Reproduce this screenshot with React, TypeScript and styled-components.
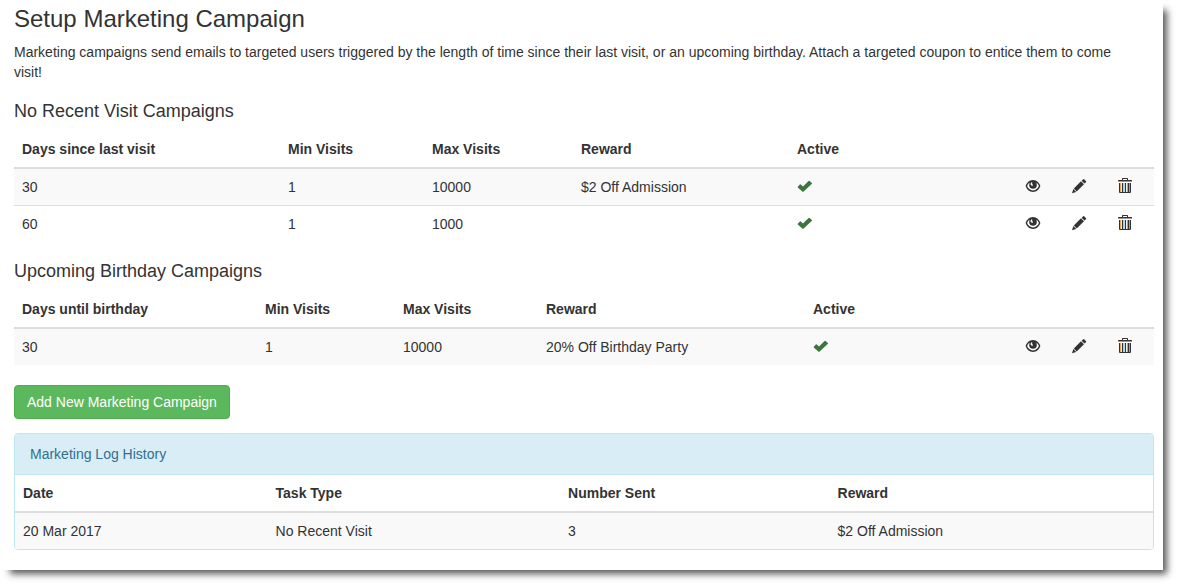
import React from "react";
import styled, { createGlobalStyle } from "styled-components";

const GlobalStyle = createGlobalStyle`
  *, *::before, *::after { box-sizing: border-box; }
  body {
    margin: 0;
    background: #fff;
    color: #333;
    font-family: "Liberation Sans", Arial, sans-serif;
    font-size: 14px;
    line-height: 20px;
  }
`;

const Page = styled.div`
  padding: 0 15px 15px 0;
`;

const Sheet = styled.main`
  padding: 6px 9px 20px 14px;
  background: #fff;
  box-shadow: 7px 7px 7px -3px rgba(0, 0, 0, 0.65);
`;

const Title = styled.h1`
  margin: 0 0 10px;
  font-size: 24px;
  line-height: 26px;
  font-weight: 400;
`;

const Intro = styled.p`
  margin: 0 0 19px;
  padding-right: 16px;
`;

const SectionTitle = styled.h2`
  margin: 0 0 10px;
  font-size: 18px;
  line-height: 20px;
  font-weight: 400;
`;

const Section = styled.section`
  margin-bottom: 19px;
`;

const Table = styled.table`
  width: 100%;
  table-layout: fixed;
  border-collapse: separate;
  border-spacing: 0;
`;

const Col = styled.col<{ $share: number }>`
  width: ${({ $share }) => ($share / 1140) * 100}%;
`;

const HeadCell = styled.th`
  padding: 8px;
  border-bottom: 2px solid #ddd;
  text-align: left;
  font-weight: 700;
`;

const Row = styled.tr`
  &:nth-child(odd) { background: #f9f9f9; }
  &:not(:first-child) td { border-top: 1px solid #ddd; }
`;

const Cell = styled.td`
  padding: 8px;
`;

const IconCell = styled(Cell)`
  padding: 0 8px 2px;
`;

const IconButton = styled.button`
  display: flex;
  margin: 0;
  padding: 0;
  border: 0;
  background: none;
  color: #333;
  cursor: pointer;
`;

const Icon = styled.svg`
  display: block;
  width: 16px;
  height: 16px;
  fill: currentColor;
`;

const CheckIcon = styled(Icon)`
  color: #3c763d;
`;

const AddButton = styled.button`
  display: block;
  margin: 20px 0 14px;
  padding: 6px 12px;
  border: 1px solid #4cae4c;
  border-radius: 4px;
  background: #5cb85c;
  color: #fff;
  font: inherit;
  cursor: pointer;
`;

const Panel = styled.section`
  border: 1px solid #bce8f1;
  border-radius: 4px;
  overflow: hidden;
`;

const PanelHeading = styled.h2`
  margin: 0;
  padding: 10px 15px;
  border-bottom: 1px solid #bce8f1;
  background: #d9edf7;
  color: #31708f;
  font-size: 14px;
  line-height: 20px;
  font-weight: 400;
`;

const Check = () => (
  <CheckIcon viewBox="0 0 16 16" role="img" aria-label="Active">
    <path d="M.8 8.800 2.800 6.500Q3.300 6.100 3.800 6.500L6 8.500 11.600 2.900Q12.100 2.500 12.600 2.900L14.900 5Q15.200 5.400 14.900 5.800L6.700 13.600Q6 14.100 5.300 13.600L.8 9.600Q.5 9.200.8 8.800Z" />
  </CheckIcon>
);

const Eye = () => (
  <Icon viewBox="0 0 16 16" aria-hidden="true">
    <path
      fillRule="evenodd"
      d="M8 2C11.6 2 14.4 4.9 15.4 8 14.4 11 11.6 14 8 14S1.6 11 .6 8C1.600 4.900 4.400 2 8 2ZM4.800 4.600C3.500 5.400 2.600 6.700 2.100 8 3.100 10.300 5.200 12.500 8 12.500S12.900 10.300 13.900 8C13.400 6.700 12.500 5.400 11.200 4.600 11.600 5.300 11.800 6.100 11.800 6.900A3.800 3.800 0 0 1 4.200 6.900C4.200 6.100 4.400 5.300 4.800 4.600ZM7.200 3.900C5.900 4.300 5.200 5.600 5.700 6.700 6.100 7.500 6.900 7.900 7.700 7.700 8.500 7.400 7.600 6.800 7.300 6.100 7 5.400 7 4.600 7.200 3.900Z"
    />
  </Icon>
);

const Pencil = () => (
  <Icon viewBox="0 0 16 16" aria-hidden="true">
    <path d="M12 1.400Q12.700 .8 13.400 1.400L14.900 2.900Q15.500 3.600 14.900 4.200L13.500 5.600 10.600 2.800ZM10 3.300 13 6.200 5.700 13.400 2.800 10.500ZM2.300 11 5.200 13.900 1 15.200Z" />
  </Icon>
);

const Trash = () => (
  <Icon viewBox="0 1 16 16" aria-hidden="true">
    <path d="M5 3V1.700Q5 1 5.700 1H10.300Q11 1 11 1.700V3H14.500Q15 3 15 4H1Q1 3 1.500 3ZM6 3H10V2H6Z" />
    <path fill="#999" d="M1 4H15V5H1Z" />
    <path d="M2 6H14V15Q14 16 13 16H3Q2 16 2 15Z" />
    <path fill="#e5a55c" d="M3 6H4V15H3Z" />
    <path fill="#f6ead2" d="M4 6H5V15H4Z" />
    <path fill="#e9bd88" d="M6 6H7V15H6Z" />
    <path fill="#b5dcf6" d="M7 6H8V15H7Z" />
    <path fill="#f8f1e4" d="M9 6H10V15H9Z" />
    <path fill="#6db5ec" d="M10 6H11V15H10Z" />
    <path fill="#5fa8e3" d="M12 6H13V15H12Z" />
  </Icon>
);

type Campaign = { days: string; min: string; max: string; reward: string };

const recent: Campaign[] = [
  { days: "30", min: "1", max: "10000", reward: "$2 Off Admission" },
  { days: "60", min: "1", max: "1000", reward: "" },
];

const birthday: Campaign[] = [
  { days: "30", min: "1", max: "10000", reward: "20% Off Birthday Party" },
];

const history = [
  { date: "20 Mar 2017", type: "No Recent Visit", sent: "3", reward: "$2 Off Admission" },
];

const actions = [
  { label: "View campaign", Glyph: Eye },
  { label: "Edit campaign", Glyph: Pencil },
  { label: "Delete campaign", Glyph: Trash },
];

type CampaignTableProps = { title: string; daysLabel: string; shares: number[]; rows: Campaign[] };

const CampaignTable = ({ title, daysLabel, shares, rows }: CampaignTableProps) => (
  <Section>
    <SectionTitle>{title}</SectionTitle>
    <Table aria-label={title}>
      <colgroup>
        {shares.map((share, i) => <Col key={i} $share={share} />)}
      </colgroup>
      <thead>
        <tr>
          {[daysLabel, "Min Visits", "Max Visits", "Reward", "Active"].map((label) => (
            <HeadCell key={label} scope="col">{label}</HeadCell>
          ))}
          <HeadCell as="td" colSpan={3} />
        </tr>
      </thead>
      <tbody>
        {rows.map((row) => (
          <Row key={row.days}>
            <Cell>{row.days}</Cell>
            <Cell>{row.min}</Cell>
            <Cell>{row.max}</Cell>
            <Cell>{row.reward}</Cell>
            <IconCell><Check /></IconCell>
            {actions.map(({ label, Glyph }) => (
              <IconCell key={label}>
                <IconButton type="button" aria-label={label}><Glyph /></IconButton>
              </IconCell>
            ))}
          </Row>
        ))}
      </tbody>
    </Table>
  </Section>
);

export default function App() {
  return (
    <Page>
      <GlobalStyle />
      <Sheet>
        <Title>Setup Marketing Campaign</Title>
        <Intro>
          Marketing campaigns send emails to targeted users triggered by the length of time since
          their last visit, or an upcoming birthday. Attach a targeted coupon to entice them to come
          visit!
        </Intro>
        <CampaignTable
          title="No Recent Visit Campaigns"
          daysLabel="Days since last visit"
          shares={[266, 144, 149, 216, 228, 46, 46, 45]}
          rows={recent}
        />
        <CampaignTable
          title="Upcoming Birthday Campaigns"
          daysLabel="Days until birthday"
          shares={[243, 138, 143, 267, 212, 46, 46, 45]}
          rows={birthday}
        />
        <AddButton type="button">Add New Marketing Campaign</AddButton>
        <Panel>
          <PanelHeading>Marketing Log History</PanelHeading>
          <Table aria-label="Marketing Log History">
            <colgroup>
              {[253, 293, 270, 324].map((share, i) => <Col key={i} $share={share} />)}
            </colgroup>
            <thead>
              <tr>
                {["Date", "Task Type", "Number Sent", "Reward"].map((label) => (
                  <HeadCell key={label} scope="col">{label}</HeadCell>
                ))}
              </tr>
            </thead>
            <tbody>
              {history.map((entry) => (
                <Row key={entry.date}>
                  <Cell>{entry.date}</Cell>
                  <Cell>{entry.type}</Cell>
                  <Cell>{entry.sent}</Cell>
                  <Cell>{entry.reward}</Cell>
                </Row>
              ))}
            </tbody>
          </Table>
        </Panel>
      </Sheet>
    </Page>
  );
}
